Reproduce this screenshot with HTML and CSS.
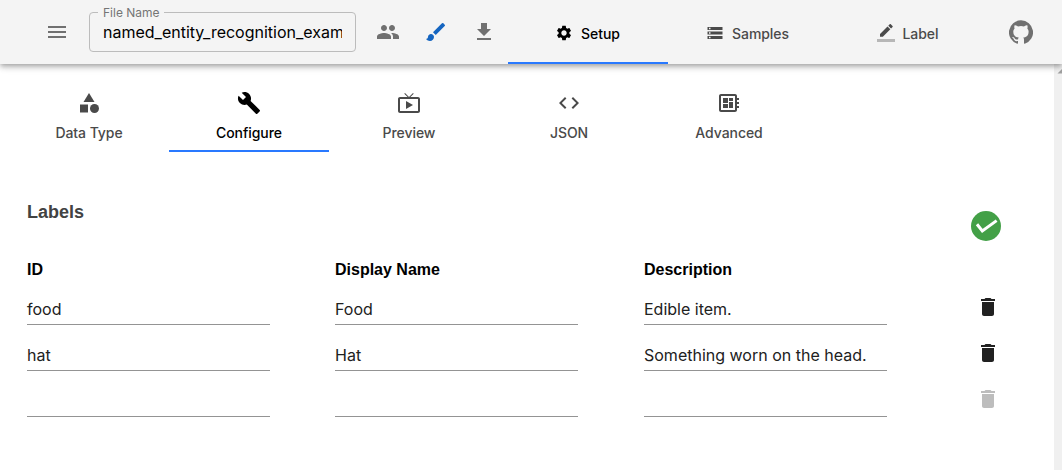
FILE: index.html
```html
<!DOCTYPE html>
<html lang="en">
<head>
<meta charset="utf-8">
<title>Setup</title>
<link rel="stylesheet" href="styles.css">
</head>
<body>
<div class="app">
  <header class="topbar">
    <svg class="icon menu" viewBox="0 0 24 24"><path d="M3 18h18v-2H3v2zm0-5h18v-2H3v2zm0-7v2h18V6H3z"/></svg>
    <fieldset class="filename">
      <legend>File Name</legend>
      <div class="filename-value">named_entity_recognition_exam</div>
    </fieldset>
    <div class="actions">
      <svg class="icon" viewBox="0 0 24 24"><path d="M16 11c1.66 0 2.99-1.34 2.99-3S17.66 5 16 5c-1.66 0-3 1.34-3 3s1.34 3 3 3zm-8 0c1.66 0 2.99-1.34 2.99-3S9.66 5 8 5C6.34 5 5 6.34 5 8s1.34 3 3 3zm0 2c-2.33 0-7 1.17-7 3.5V19h14v-2.500c0-2.330-4.670-3.500-7-3.500zm8 0c-.29 0-.62.02-.97.05 1.160.84 1.970 1.970 1.970 3.450V19h6v-2.500c0-2.330-4.670-3.500-7-3.500z"/></svg>
      <svg class="icon brush" viewBox="0 0 24 24"><path d="M7 14c-1.660 0-3 1.340-3 3 0 1.310-1.160 2-2 2 .92 1.220 2.490 2 4 2 2.210 0 4-1.790 4-4 0-1.660-1.340-3-3-3zm13.710-9.370l-1.340-1.340a.996.996 0 0 0-1.410 0L9 12.250 11.750 15l8.960-8.960a.996.996 0 0 0 0-1.410z"/></svg>
      <svg class="icon" viewBox="0 0 24 24"><path d="M19 9h-4V3H9v6H5l7 7 7-7zM5 18v2h14v-2H5z"/></svg>
    </div>
    <nav class="main-tabs">
      <div class="tab active">
        <svg class="small-icon" viewBox="0 0 24 24"><path d="M19.140 12.940c.04-.3.06-.61.06-.94 0-.32-.02-.64-.07-.94l2.030-1.580c.18-.14.23-.41.12-.61l-1.920-3.320c-.12-.22-.37-.29-.59-.22l-2.390.96c-.5-.38-1.030-.7-1.620-.94l-.36-2.540c-.04-.24-.24-.41-.48-.41h-3.840c-.24 0-.43.17-.47.41l-.36 2.540c-.59.24-1.130.57-1.620.94l-2.390-.96c-.22-.08-.47 0-.59.22L2.740 8.870c-.12.21-.08.47.12.61l2.030 1.580c-.05.3-.09.63-.09.94s.02.64.07.94l-2.030 1.580c-.18.14-.23.41-.12.61l1.920 3.320c.12.22.37.29.59.22l2.390-.96c.5.38 1.030.7 1.620.94l.36 2.540c.05.24.24.41.48.41h3.840c.24 0 .44-.17.47-.41l.36-2.540c.59-.24 1.130-.56 1.620-.94l2.390.96c.22.08.47 0 .59-.22l1.920-3.320c.12-.22.07-.47-.12-.61l-2.010-1.580zM12 15.600c-1.980 0-3.600-1.620-3.600-3.600s1.620-3.600 3.600-3.600 3.600 1.620 3.600 3.600-1.620 3.600-3.600 3.600z"/></svg>
        <span>Setup</span>
      </div>
      <div class="tab">
        <svg class="small-icon" viewBox="0 0 24 24"><path d="M2 20h20v-4H2v4zm2-3h2v2H4v-2zM2 4v4h20V4H2zm4 3H4V5h2v2zm-4 7h20v-4H2v4zm2-3h2v2H4v-2z"/></svg>
        <span>Samples</span>
      </div>
      <div class="tab">
        <svg class="small-icon" viewBox="0 0 24 24"><path d="M17.750 7L14 3.250l-10 10V17h3.750l10-10zm2.960-2.960c.39-.39.39-1.020 0-1.410L18.370.29c-.39-.39-1.020-.39-1.410 0L15 2.250 18.750 6l1.960-1.960z"/><path fill-opacity=".36" d="M0 20h24v4H0z"/></svg>
        <span>Label</span>
      </div>
    </nav>
    <svg class="icon github" viewBox="0 0 24 24"><path d="M12 .3a12 12 0 0 0-3.800 23.400c.6.1.8-.3.8-.6v-2c-3.300.7-4-1.600-4-1.600-.6-1.400-1.400-1.800-1.400-1.800-1-.7.1-.7.1-.7 1.200 0 1.900 1.200 1.900 1.200 1 1.800 2.800 1.300 3.500 1 0-.8.4-1.300.7-1.600-2.700-.3-5.500-1.300-5.500-6 0-1.200.5-2.300 1.300-3.100-.2-.4-.6-1.600 0-3.200 0 0 1-.3 3.400 1.200a11.500 11.500 0 0 1 6 0c2.300-1.500 3.300-1.200 3.300-1.200.6 1.600.2 2.800 0 3.200.9.8 1.300 1.900 1.300 3.200 0 4.600-2.800 5.600-5.500 5.900.5.4.9 1 .9 2.200v3.300c0 .3.1.7.8.6A12 12 0 0 0 12 .3"/></svg>
  </header>

  <div class="body">
    <main class="content">
      <nav class="sub-tabs">
        <div class="tab stacked">
          <svg class="icon" viewBox="0 0 24 24"><path d="M12 2l-5.500 9h11z"/><circle cx="17.500" cy="17.500" r="4.500"/><path d="M3 13.500h8v8H3z"/></svg>
          <span>Data Type</span>
        </div>
        <div class="tab stacked active">
          <svg class="icon" viewBox="0 0 24 24"><path d="M22.700 19l-9.100-9.100c.9-2.300.4-5-1.500-6.900-2-2-5-2.400-7.400-1.300L9 6 6 9 1.600 4.700C.4 7.100.9 10.100 2.900 12.100c1.900 1.900 4.600 2.400 6.900 1.500l9.100 9.100c.4.4 1 .4 1.400 0l2.300-2.300c.5-.4.5-1.100.1-1.400z"/></svg>
          <span>Configure</span>
        </div>
        <div class="tab stacked">
          <svg class="icon" viewBox="0 0 24 24"><path d="M21 6h-7.590l3.290-3.290L16 2l-4 4-4-4-.71.71L10.590 6H3c-1.100 0-2 .89-2 2v12c0 1.100.9 2 2 2h18c1.100 0 2-.9 2-2V8c0-1.110-.9-2-2-2zm0 14H3V8h18v12zM9 10v8l7-4z"/></svg>
          <span>Preview</span>
        </div>
        <div class="tab stacked">
          <svg class="icon" viewBox="0 0 24 24"><path d="M9.400 16.600L4.800 12l4.600-4.600L8 6l-6 6 6 6 1.400-1.400zm5.200 0l4.600-4.600-4.600-4.600L16 6l6 6-6 6-1.400-1.400z"/></svg>
          <span>JSON</span>
        </div>
        <div class="tab stacked">
          <svg class="icon" viewBox="0 0 24 24"><path d="M22 9V7h-2V5c0-1.100-.9-2-2-2H4c-1.100 0-2 .9-2 2v14c0 1.100.9 2 2 2h14c1.100 0 2-.9 2-2v-2h2v-2h-2v-2h2v-2h-2V9h2zm-4 10H4V5h14v14zM6 13h5v4H6zm6-6h4v3h-4zM6 7h5v5H6zm6 4h4v6h-4z"/></svg>
          <span>Advanced</span>
        </div>
      </nav>

      <section class="labels">
        <div class="labels-head">
          <h2>Labels</h2>
          <svg class="status" viewBox="0 0 30 30"><circle cx="15" cy="15" r="15"/><path d="M6 13.200l5.300 6.700L25.600 9.600"/></svg>
        </div>
        <div class="row heads">
          <div>ID</div><div>Display Name</div><div>Description</div>
        </div>
        <div class="row">
          <div class="field">food</div><div class="field">Food</div><div class="field">Edible item.</div>
          <svg class="icon trash" viewBox="0 0 24 24"><path d="M6 19c0 1.100.9 2 2 2h8c1.100 0 2-.9 2-2V7H6v12zM19 4h-3.500l-1-1h-5l-1 1H5v2h14V4z"/></svg>
        </div>
        <div class="row">
          <div class="field">hat</div><div class="field">Hat</div><div class="field">Something worn on the head.</div>
          <svg class="icon trash" viewBox="0 0 24 24"><path d="M6 19c0 1.100.9 2 2 2h8c1.100 0 2-.9 2-2V7H6v12zM19 4h-3.500l-1-1h-5l-1 1H5v2h14V4z"/></svg>
        </div>
        <div class="row">
          <div class="field"></div><div class="field"></div><div class="field"></div>
          <svg class="icon trash disabled" viewBox="0 0 24 24"><path d="M6 19c0 1.100.9 2 2 2h8c1.100 0 2-.9 2-2V7H6v12zM19 4h-3.500l-1-1h-5l-1 1H5v2h14V4z"/></svg>
        </div>
      </section>
    </main>
    <div class="scrollbar">
      <svg viewBox="0 0 8 12"><path d="M3.500 9.500L8 5v4.500z"/></svg>
    </div>
  </div>
</div>
</body>
</html>
```
FILE: styles.css
```css
* { box-sizing: border-box; }

body {
  margin: 0;
  background: #fff;
  color: #212121;
  font-family: Inter, Roboto, sans-serif;
}

.app {
  display: flex;
  flex-direction: column;
  height: 470px;
  overflow: hidden;
}

.topbar {
  position: relative;
  z-index: 1;
  display: flex;
  align-items: center;
  flex: none;
  height: 64px;
  background: #f4f4f4;
  box-shadow: 0 2px 4px -1px rgba(0,0,0,.2), 0 4px 5px rgba(0,0,0,.14), 0 1px 10px rgba(0,0,0,.12);
}

.icon {
  display: block;
  flex: none;
  width: 24px;
  height: 24px;
  fill: currentColor;
}

.topbar > .icon, .actions { color: #707070; }
.menu { margin-left: 45px; }

.filename {
  width: 267px;
  height: 45px;
  margin: -5px 0 0 20px;
  padding: 0 13px;
  border: 1px solid #bcbcbc;
  border-radius: 4px;
  min-width: 0;
}

.filename legend {
  height: 11px;
  margin-left: -5px;
  padding: 0 4px 0 5px;
  color: #757575;
  font-size: 12px;
  line-height: 12px;
}

.filename-value {
  overflow: hidden;
  margin-top: 3px;
  color: #000;
  font-size: 16px;
  line-height: 23px;
  white-space: nowrap;
}

.actions {
  display: flex;
  gap: 24px;
  margin-left: 20px;
}

.brush { color: #1565c0; }

.main-tabs {
  display: flex;
  height: 64px;
  margin-left: 12px;
}

.tab {
  display: flex;
  align-items: center;
  justify-content: center;
  gap: 8px;
  width: 160px;
  padding-top: 4px;
  border-bottom: 2px solid transparent;
  color: #4a4a4a;
  font-size: 14px;
  font-weight: 500;
  letter-spacing: -.06px;
  line-height: 24px;
}

.main-tabs .tab { padding-right: 1px; }
.main-tabs span { padding-top: 2px; }

.tab.active {
  border-bottom-color: #2979ff;
  color: #000;
}

.small-icon {
  width: 18px;
  height: 18px;
  fill: currentColor;
}

.github { margin-left: 21px; }

.body {
  display: flex;
  flex: 1;
  min-height: 0;
}

.content { flex: 1; }

.sub-tabs {
  display: flex;
  padding: 16px 0 0 9px;
}

.stacked {
  flex-direction: column;
  justify-content: flex-start;
  gap: 6px;
  height: 72px;
  padding-top: 11px;
}

.labels { padding: 48px 0 0 27px; }

.labels-head {
  display: flex;
  justify-content: space-between;
  height: 58px;
  padding-right: 53px;
}

h2 {
  margin: 0;
  color: #424242;
  font: bold 18px/24px "Liberation Sans", Arial, sans-serif;
}

.status {
  width: 30px;
  height: 30px;
  margin-top: 11px;
}

.status circle { fill: #43a047; }
.status path {
  fill: none;
  stroke: #fff;
  stroke-width: 3;
}

.row {
  display: grid;
  grid-template-columns: 308px 309px 332px 24px;
  height: 46px;
  font-size: 16px;
}

.heads {
  height: 35px;
  color: #000;
  font: bold 16px/24px "Liberation Sans", Arial, sans-serif;
}

.field {
  width: 243px;
  height: 32px;
  border-bottom: 1px solid #949494;
  line-height: 32px;
  white-space: nowrap;
}

.trash { margin-top: 2px; }

.disabled { color: #bdbdbd; }

.scrollbar {
  width: 8px;
  background: #f0f0f0;
}

.scrollbar svg {
  display: block;
  width: 8px;
  height: 12px;
  fill: #a0a0a0;
}
```
